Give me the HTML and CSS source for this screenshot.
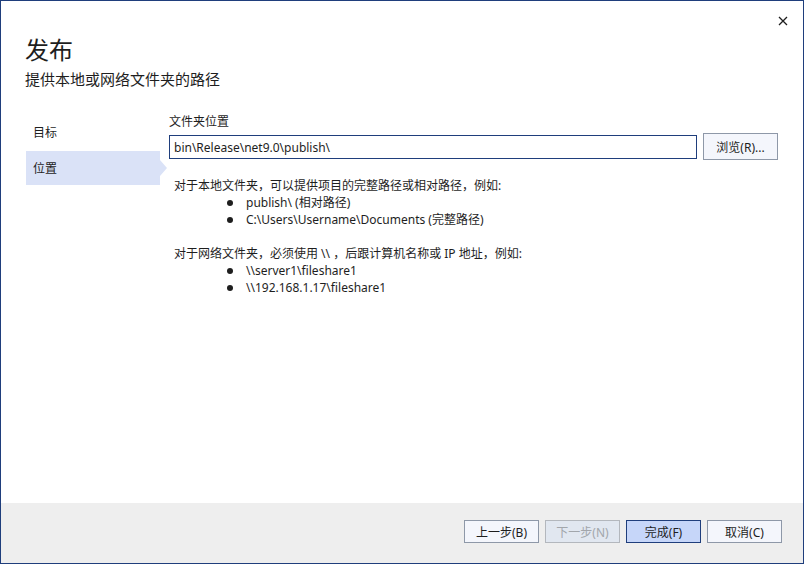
FILE: index.html
```html
<!DOCTYPE html>
<html lang="zh-CN">
<head>
    <meta charset="UTF-8">
    <title>发布</title>
    <link rel="stylesheet" href="styles.css">
</head>
<body>
    <div class="window">
        <button class="close" aria-label="关闭">
            <svg width="10" height="10" viewBox="0 0 10 10">
                <path d="M1 1 L9 9 M9 1 L1 9" stroke="#1e1e1e" stroke-width="1.3" fill="none"/>
            </svg>
        </button>

        <div class="content">
            <div class="header">
                <h1>发布</h1>
                <p class="subtitle">提供本地或网络文件夹的路径</p>
            </div>

            <div class="wizard">
                <nav class="steps">
                    <div class="step">目标</div>
                    <div class="step active">位置</div>
                </nav>

                <div class="page">
                    <label class="field-label" for="folder">文件夹位置</label>
                    <div class="field-row">
                        <input type="text" id="folder" class="path-input" value="bin\Release\net9.0\publish\">
                        <button class="btn browse">浏览(R)...</button>
                    </div>

                    <div class="help">
                        <p>对于本地文件夹，可以提供项目的完整路径或相对路径，例如:</p>
                        <div class="bullet"><span class="dot"></span>publish\ (相对路径)</div>
                        <div class="bullet"><span class="dot"></span>C:\Users\Username\Documents (完整路径)</div>
                        <p class="gap">对于网络文件夹，必须使用 \\ ，后跟计算机名称或 IP 地址，例如:</p>
                        <div class="bullet"><span class="dot"></span>\\server1\fileshare1</div>
                        <div class="bullet"><span class="dot"></span>\\192.168.1.17\fileshare1</div>
                    </div>
                </div>
            </div>
        </div>

        <div class="footer">
            <button class="btn">上一步(B)</button>
            <button class="btn" disabled>下一步(N)</button>
            <button class="btn primary">完成(F)</button>
            <button class="btn">取消(C)</button>
        </div>
    </div>
</body>
</html>
```

FILE: styles.css
```css
/* Global Styles */
* {
    margin: 0;
    padding: 0;
    box-sizing: border-box;
}

body {
    font-family: "Noto Sans", "Noto Sans CJK SC", sans-serif;
    font-size: 12px;
    color: #1e1e1e;
    background-color: #ffffff;
}

/* Window */
.window {
    position: relative;
    width: 804px;
    height: 564px;
    border: 1px solid #1f3e7c;
    display: flex;
    flex-direction: column;
    background-color: #ffffff;
}

.close {
    position: absolute;
    top: 15px;
    right: 15px;
    width: 10px;
    height: 10px;
    border: none;
    background: none;
    display: flex;
}

.content {
    flex: 1;
    padding: 32px 0 0 24px;
}

/* Header */
.header h1 {
    font-size: 24px;
    font-weight: normal;
    line-height: 32px;
    font-family: "Noto Sans CJK SC", sans-serif;
}

.subtitle {
    font-size: 15px;
    line-height: 20px;
    margin-top: 4px;
    font-family: "Noto Sans CJK SC", sans-serif;
}

/* Wizard body */
.wizard {
    display: flex;
    margin-top: 24px;
}

.steps {
    width: 135px;
    display: flex;
    flex-direction: column;
    gap: 4px;
    padding-top: 4px;
    padding-left: 1px;
}

.step {
    height: 30px;
    line-height: 30px;
    padding-left: 7px;
    font-family: "Noto Sans CJK SC", sans-serif;
    position: relative;
}

.step.active {
    height: 34px;
    line-height: 34px;
    background-color: #dae2f7;
}

.step.active::after {
    content: "";
    position: absolute;
    right: -7px;
    top: 9px;
    border-top: 8px solid transparent;
    border-bottom: 8px solid transparent;
    border-left: 7px solid #dae2f7;
}

.page {
    margin-left: 9px;
    flex: 1;
    padding-right: 25px;
}

.field-label {
    display: block;
    line-height: 16px;
    font-family: "Noto Sans CJK SC", sans-serif;
}

.field-row {
    display: flex;
    align-items: flex-start;
    gap: 6px;
    margin-top: 6px;
}

.path-input {
    flex: 1;
    height: 24px;
    border: 1px solid #1f3e7c;
    padding: 0 4px;
    font-family: inherit;
    font-size: 12px;
    color: #1e1e1e;
    outline: none;
}

/* Buttons */
.btn {
    width: 75px;
    height: 23px;
    border: 1px solid #8e98a8;
    background-color: #f4f6fc;
    font-family: inherit;
    font-size: 12px;
    color: #1e1e1e;
}

.btn.browse {
    height: 27px;
    margin-top: -2px;
}

.btn:disabled {
    background-color: #e1e7f0;
    border-color: #b3b7bd;
    color: #a2a6ab;
}

.btn.primary {
    background-color: #c6d6f9;
    border-color: #1f3e7c;
}

/* Help text */
.help {
    margin-top: 17px;
    padding-left: 5px;
    line-height: 17px;
}

.help .gap {
    margin-top: 17px;
}

.bullet {
    display: flex;
    align-items: center;
    padding-left: 53px;
}

.dot {
    width: 6px;
    height: 6px;
    border-radius: 50%;
    background-color: #1e1e1e;
    margin-right: 13px;
}

/* Footer */
.footer {
    height: 60px;
    background-color: #eeeeee;
    display: flex;
    justify-content: flex-end;
    gap: 6px;
    padding: 17px 21px 0 0;
}
```
